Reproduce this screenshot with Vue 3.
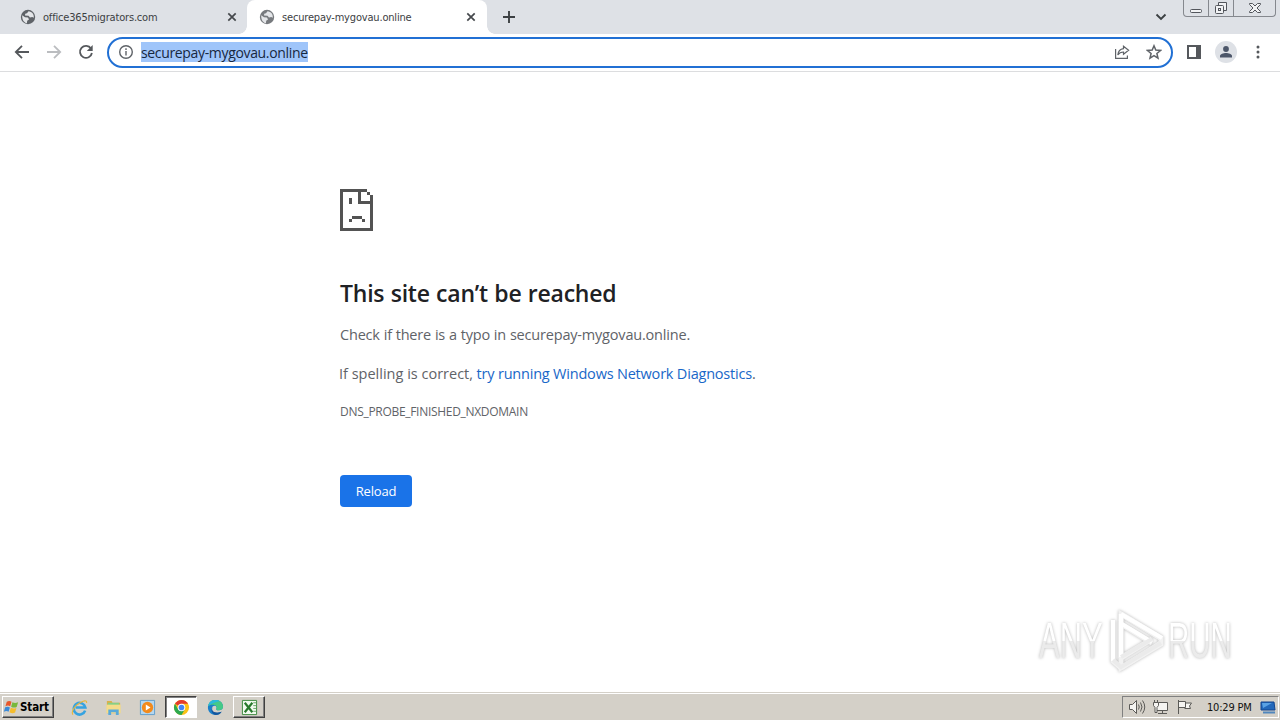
<template>
  <div class="desktop">
    <header class="tab-strip">
      <div
        v-for="(tab, i) in tabs"
        :key="tab.title"
        class="tab"
        :class="{ active: i === activeTab }"
        @click="activeTab = i"
      >
        <svg class="globe" viewBox="0 0 16 16">
          <circle cx="8" cy="8" r="7.2" />
          <path d="M2.2 6.2 5 8.2l3 .4 1 2-1.8 1.2-.3 2.4C3.800 13.600 2 10.500 2.200 6.200ZM8.500 2.200 7 4.200 5.200 4.700 5 6.500l3.500.3 1.500 1.700 2.200-.5 1.600.8C14.200 5 12 2.600 8.500 2.200Z" />
        </svg>
        <span class="tab-title">{{ tab.title }}</span>
        <svg class="tab-close" viewBox="0 0 10 10"><path d="m1.300 1.300 7.400 7.400m0-7.400-7.400 7.400" /></svg>
      </div>
      <button class="new-tab">
        <svg viewBox="0 0 14 14"><path d="M7 1v12M1 7h12" /></svg>
      </button>
      <svg class="tab-search" viewBox="0 0 12 8"><path d="m1.500 1.500 4.500 4.500 4.500-4.500" /></svg>
      <div class="window-controls">
        <span class="control">
          <svg width="14" height="17" viewBox="0 0 14 17"><rect x="1.500" y="9.500" width="11" height="3" rx="1" /></svg>
        </span>
        <span class="control">
          <svg width="14" height="17" viewBox="0 0 14 17">
            <path d="M4.500 5V2.500h8v8H10" />
            <rect x="1.500" y="5.500" width="8" height="8" rx="1" />
            <rect x="4.500" y="8.500" width="2" height="2" />
          </svg>
        </span>
        <span class="control wide">
          <svg width="14" height="17" viewBox="0 0 14 17">
            <path d="M1.500 3.500h3L7 6l2.500-2.500h3v1L9 8l3.500 3.500v1h-3L7 10l-2.500 2.500h-3v-1L5 8 1.500 4.500Z" />
          </svg>
        </span>
      </div>
    </header>

    <nav class="toolbar">
      <svg class="nav-icon" viewBox="0 0 16 16"><path d="M15 8H2m6-6.200L1.800 8 8 14.200" /></svg>
      <svg class="nav-icon disabled" viewBox="0 0 16 16"><path d="M1 8h13M8 1.800 14.200 8 8 14.200" /></svg>
      <svg class="nav-icon" viewBox="0 0 16 16">
        <path d="M13 4.500A6 6 0 1 0 13.900 9" />
        <path class="solid" d="M14.700 1v6H8.800Z" />
      </svg>
      <div class="omnibox">
        <svg class="info" viewBox="0 0 16 16">
          <circle cx="8" cy="8" r="6.300" />
          <path d="M8 7v4.500M8 4.300v1.600" />
        </svg>
        <span class="url">securepay-mygovau.online</span>
        <svg class="share" viewBox="0 0 16 16">
          <path d="M1.600 5v9.400h11.800v-3" />
          <path d="M9.500 2.300 14.600 6.300 9.500 10.300V8C7 8 5.200 8.900 3.800 11 4.200 7.500 6.200 5.100 9.500 4.700Z" />
        </svg>
        <svg class="star" viewBox="0 0 16 16">
          <path d="m8 1.800 1.800 4.300 4.700.4-3.600 3 1.100 4.600L8 11.700l-4 2.400 1.100-4.600-3.600-3 4.700-.4Z" />
        </svg>
      </div>
      <svg class="panel" viewBox="0 0 14 14">
        <rect x="1" y="1" width="12" height="12" />
        <path d="M9 1h4v12H9Z" />
      </svg>
      <span class="avatar">
        <svg viewBox="0 0 14 14">
          <circle cx="7" cy="4" r="2.900" />
          <path d="M1 12.500V11c0-2 3.500-3 6-3s6 1 6 3v1.500Z" />
        </svg>
      </span>
      <svg class="menu" viewBox="0 0 4 16">
        <circle cx="2" cy="3" r="1.500" />
        <circle cx="2" cy="8" r="1.500" />
        <circle cx="2" cy="13" r="1.500" />
      </svg>
    </nav>

    <main class="page">
      <svg class="sad-file" viewBox="0 0 33 42" shape-rendering="crispEdges">
        <path d="M0 0h27v3h-6v9h9V6h3v36H0ZM3 3v36h27V15H18V3Z" fill-rule="evenodd" />
        <path d="M27 3h3v3h-3Z" />
        <path d="M9 9h3v6H9ZM12 27h10v3H12ZM9 30h3v3H9ZM22 30h3v3h-3Z" />
      </svg>
      <h1>This site can’t be reached</h1>
      <p class="typo">Check if there is a typo in securepay-mygovau.online.</p>
      <p class="spelling">
        <span class="lead">If spelling is correct,</span> <a>try running Windows Network Diagnostics</a>.
      </p>
      <p class="code">DNS_PROBE_FINISHED_NXDOMAIN</p>
      <button class="reload">Reload</button>

      <div class="watermark">
        <span class="word">ANY</span>
        <svg viewBox="0 0 58 62">
          <path d="M12 4 52 28v6L12 58V4Z" class="halo" />
          <path d="M4 10v41l8 7M12 4v44M12 4l41 25M12 14l31 19M12 48l31-19M12 58l41-26" class="halo" />
          <path d="M4 10v41M12 4v43M12 4l41 24M13 14l30 18" class="bright" />
          <path d="M4 50l8 7 40-24M12 47l31-18" class="dim" />
        </svg>
        <span class="word run">RUN</span>
      </div>
    </main>

    <footer class="taskbar">
      <button class="start">
        <svg viewBox="0 0 18 16">
          <path fill="#e8572b" d="M4 2.500c2-1.300 3.500-1 5 0L7.600 7.300C6 6.300 4.600 6.200 2.600 7.300Z" />
          <path fill="#78b83c" d="M10 3c2 1 3.500 1 6 0l-1.500 5c-2 1-4 .8-5.900-.3Z" />
          <path fill="#3b8ad8" d="M2.300 8.300c2-1 3.500-.8 5 .1L5.900 13c-1.600-1-3-1-5 0Z" />
          <path fill="#f5bd2d" d="M8.300 8.900c2 1 3.600 1 5.900.2l-1.400 4.800c-2.200 1-4 .7-5.900-.4Z" />
        </svg>
        <span>Start</span>
      </button>
      <div class="launchers">
        <span class="task">
          <svg viewBox="0 0 18 18">
            <path d="M15 12.300A6.200 6.200 0 1 1 15.200 9H5" fill="none" stroke="#36a3e0" stroke-width="2.700" />
            <path d="M2 16.500C-.5 13 5 6.500 9 4.200s8-3.700 7.500 0" fill="none" stroke="#e8b73a" stroke-width="1.200" />
          </svg>
        </span>
        <span class="task">
          <svg viewBox="0 0 18 18">
            <path d="M2 2h5l1 2h8v11H2Z" fill="#dcb04a" />
            <path d="M3 4h12v6H3Z" fill="#86cf86" />
            <path d="M1.500 6h15v9h-15Z" fill="#f5dc8a" />
            <path d="M3.500 17v-6h11v6h-3v-3h-5v3Z" fill="#58a9da" />
          </svg>
        </span>
        <span class="task">
          <svg viewBox="0 0 18 18">
            <path d="M1.500 1.500h15v15h-15Z" fill="#b5d7ef" stroke="#5f9dcb" />
            <circle cx="9" cy="9" r="6" fill="#f28a1c" />
            <path d="m7.200 5.800 5 3.200-5 3.200Z" fill="#fff" />
          </svg>
        </span>
        <span class="task pressed">
          <svg viewBox="0 0 18 18">
            <circle cx="9" cy="9" r="8" fill="#fbc116" />
            <path d="M9 9 2.100 5A8 8 0 0 1 16 5H9Z" fill="#e33b2e" />
            <path d="M2.100 5A8 8 0 0 0 9 17l3.500-6H5.500Z" fill="#2da94f" />
            <circle cx="9" cy="9" r="4" fill="#fff" />
            <circle cx="9" cy="9" r="3" fill="#4285f4" />
          </svg>
        </span>
        <span class="task">
          <svg viewBox="0 0 18 18">
            <path d="M1 8C2 3.500 5 1 9 1c5 0 8 3.500 8 7 0 3-2.500 4-5 4-2 0-2.500-1-2-2 1-2.500-2-4-4-2-2.500 3 .5 7 4 7 2 0 4-.6 5.500-1.700C14 16 12 17 9 17c-5 0-8.500-4-8-9Z" fill="#1a7fc9" />
            <path d="M1.200 7.500C2 3 5 1 9 1c5 0 8 3.500 8 7 0 3-2.500 4-5 4-2 0-2.500-1-2-2 1.500-3-4-5.500-8.800-2.500Z" fill="#45c987" />
            <path d="M1.200 7.500C2 3 5 1 9 1c2 0 3.500.5 4.700 1.400C10 3 6 4 1.200 7.500Z" fill="#2bb8dc" />
            <path d="M6 8.500c-2 3.500 1 7.500 9.500 5C14 15.800 12 17 9 17c-4-1-5.500-5.500-3-8.500Z" fill="#12569e" />
          </svg>
        </span>
        <span class="task raised">
          <svg viewBox="0 0 18 18">
            <path d="M1.500 1.500h15v15h-15Z" fill="#f1faef" stroke="#39883b" />
            <path d="m4 4 8 10M12 4 4 14" stroke="#27792b" stroke-width="2.300" />
            <path d="M13 4h3M13 7h3M13 10h3M13 13h3" stroke="#64a465" />
          </svg>
        </span>
      </div>
      <div class="tray">
        <svg class="speaker" viewBox="0 0 18 16">
          <path d="M1.500 5.500h3l4-4v13l-4-4h-3Z" />
          <path d="M10.500 5.500q1.500 2.500 0 5M12.500 3.500q3 4.500 0 9M14.500 1.500q4.500 6.500 0 13" />
        </svg>
        <svg class="network" viewBox="0 0 18 16">
          <path d="M4.500 3.500h11v8h-11ZM6 14.500h9M10.500 12v2" />
          <path d="M1.500 3.500h5v3l-1.500 2v5H3v-5l-1.500-2ZM2.500 1v2M5.500 1v2" />
        </svg>
        <svg class="flag" viewBox="0 0 18 16">
          <path d="M2.500 1v14M2.500 2.500h7v6h-7M9.500 4h6l-2 3 1 2.500h-6" />
        </svg>
        <time>10:29 PM</time>
        <svg class="show-desktop" viewBox="0 0 16 16">
          <path d="M1 3h13l1 8H1Z" fill="#2368ba" stroke="#12458f" />
          <path d="M2 4h10L3 9Z" fill="#5aa2e4" />
          <path d="M3 13.500h12" stroke="#5087bd" stroke-width="2" />
        </svg>
      </div>
    </footer>
  </div>
</template>

<script setup>
import { ref } from 'vue'

const tabs = [
  { title: 'office365migrators.com' },
  { title: 'securepay-mygovau.online' },
]
const activeTab = ref(1)
</script>

<style>
body {
  margin: 0;
  overflow: hidden;
}
</style>

<style scoped>
.desktop {
  display: flex;
  flex-direction: column;
  width: 1280px;
  height: 720px;
  background: #fff;
  font-family: "DejaVu Sans Condensed", "DejaVu Sans", sans-serif;
}

.desktop *,
.desktop {
  box-sizing: border-box;
}

button {
  border: 0;
  padding: 0;
  font-family: inherit;
}

svg {
  display: block;
  flex: none;
  fill: none;
}

/* Tabs */
.tab-strip {
  display: flex;
  height: 34px;
  background: #dee1e6;
}

.tab {
  display: flex;
  align-items: center;
  width: 239px;
  height: 34px;
  padding: 0 11px 0 12px;
  color: #3c4043;
}

.tab:first-child {
  width: 247px;
  padding: 0 10px 0 20px;
}

.tab.active {
  position: relative;
  width: 240px;
  border-radius: 8px 8px 0 0;
  background: #fff;
}

.tab.active::before,
.tab.active::after {
  content: '';
  position: absolute;
  bottom: 0;
  width: 8px;
  height: 8px;
}

.tab.active::before {
  left: -8px;
  background: radial-gradient(circle at 0 0, transparent 7.5px, #fff 8px);
}

.tab.active::after {
  right: -8px;
  background: radial-gradient(circle at 100% 0, transparent 7.5px, #fff 8px);
}

.globe {
  width: 16px;
  height: 16px;
}

.globe circle {
  fill: #5f6368;
}

.globe path {
  fill: #e4e6e9;
}

.active .globe circle {
  fill: #777a7e;
}

.tab-title {
  flex: 1;
  margin-left: 7px;
  font-size: 11px;
  letter-spacing: -0.18px;
  white-space: nowrap;
}

.tab-close {
  width: 10px;
  height: 10px;
  stroke: #45484c;
  stroke-width: 1.7;
}

.new-tab {
  width: 44px;
  padding-left: 15px;
  background: none;
}

.new-tab svg {
  width: 14px;
  height: 14px;
  stroke: #3c4043;
  stroke-width: 1.9;
}

.tab-search {
  width: 12px;
  height: 8px;
  margin: 13px 16px 0 auto;
  stroke: #3c4043;
  stroke-width: 1.9;
}

.window-controls {
  display: flex;
  width: 93px;
  height: 17px;
  margin-right: 4px;
  border: 1px solid #85888e;
  border-top: 0;
  border-radius: 0 0 4px 4px;
}

.control {
  display: flex;
  justify-content: center;
  width: 25px;
  height: 16px;
  border-right: 1px solid #85888e;
}

.control.wide {
  width: 41px;
  border: 0;
}

.control svg {
  fill: #f1f2f4;
  stroke: #53565c;
}

/* Toolbar */
.toolbar {
  display: flex;
  align-items: center;
  height: 38px;
  padding: 0 20px 1px 14px;
  border-bottom: 1px solid #dcdddf;
}

.nav-icon {
  width: 16px;
  height: 16px;
  margin-right: 16px;
  stroke: #55585c;
  stroke-width: 1.8;
}

.nav-icon:nth-child(3) {
  margin-right: 13px;
}

.nav-icon.disabled {
  stroke: #bbbdc0;
}

.nav-icon .solid {
  fill: #55585c;
  stroke: none;
}

.omnibox {
  display: flex;
  align-items: center;
  width: 1066px;
  height: 31px;
  padding: 0 9px;
  border: 2px solid #2170d4;
  border-radius: 16px;
}

.info {
  width: 16px;
  height: 16px;
  stroke: #5f6368;
  stroke-width: 1.4;
}

.url {
  width: 167px;
  height: 20px;
  margin-left: 7px;
  background: #9fc5fa;
  color: #17283f;
  font-family: "Open Sans", sans-serif;
  font-size: 14px;
  letter-spacing: -0.34px;
  line-height: 21px;
  white-space: nowrap;
}

.share {
  width: 16px;
  height: 16px;
  margin-left: auto;
  stroke: #5f6368;
  stroke-width: 1.2;
}

.star {
  width: 16px;
  height: 16px;
  margin-left: 16px;
  stroke: #5f6368;
  stroke-width: 1.5;
}

.panel {
  width: 14px;
  height: 14px;
  margin-left: 14px;
  stroke: #55585c;
  stroke-width: 2;
}

.panel path {
  fill: #55585c;
  stroke: none;
}

.avatar {
  display: flex;
  align-items: center;
  justify-content: center;
  width: 22px;
  height: 22px;
  margin-left: 14px;
  border-radius: 50%;
  background: #dee1e6;
}

.avatar svg {
  width: 14px;
  height: 14px;
  fill: #4c5669;
}

.menu {
  width: 4px;
  height: 16px;
  margin-left: 19px;
  fill: #55585c;
}

/* Error page */
.page {
  position: relative;
  display: flex;
  flex-direction: column;
  align-items: flex-start;
  height: 620px;
  padding: 117px 0 0 340px;
  color: #5f6368;
  font-family: "Open Sans", sans-serif;
  white-space: nowrap;
}

.sad-file {
  width: 33px;
  height: 42px;
  fill: #535353;
}

h1 {
  margin: 45px 0 0;
  color: #202124;
  font-size: 23px;
  font-weight: 600;
  letter-spacing: -0.22px;
  word-spacing: 0.6px;
  line-height: 34px;
}

p {
  margin: 0;
}

.typo {
  margin-top: 14px;
  font-size: 14.5px;
  letter-spacing: -0.19px;
  word-spacing: 0.3px;
  line-height: 22px;
}

.spelling {
  margin: 17px 0 0 -1px;
  font-size: 14.5px;
  letter-spacing: -0.2px;
  line-height: 22px;
}

.spelling .lead {
  letter-spacing: 0;
}

.spelling a {
  color: #1967c8;
}

.code {
  margin-top: 17px;
  font-size: 12px;
  letter-spacing: -0.3px;
  line-height: 20px;
}

.reload {
  width: 72px;
  height: 32px;
  margin-top: 53px;
  border-radius: 4px;
  background: #1a73e8;
  color: #fff;
  font-size: 13px;
  letter-spacing: -0.2px;
}

.watermark {
  position: absolute;
  top: 537px;
  left: 1039px;
  display: flex;
  align-items: center;
  width: 196px;
  height: 64px;
  filter: drop-shadow(0 0 1.500px #b8b8b8);
}

.watermark .word {
  flex: none;
  width: 110px;
  margin-right: -40px;
  background: linear-gradient(#fff 50%, #ebebeb 50%);
  background-clip: text;
  color: transparent;
  font-family: "Liberation Sans", sans-serif;
  font-size: 50px;
  line-height: 50px;
  transform: scaleX(0.62);
  transform-origin: 0 50%;
}

.watermark .run {
  margin: 0 0 0 1px;
  transform: scaleX(0.59);
}

.watermark svg {
  width: 58px;
  height: 62px;
}

.watermark .halo {
  stroke: #f2f2f2;
  stroke-width: 5;
}

.watermark .bright {
  stroke: #fff;
  stroke-width: 4;
}

.watermark .dim {
  stroke: #ebebeb;
  stroke-width: 4;
}

/* Taskbar */
.taskbar {
  display: flex;
  align-items: center;
  height: 28px;
  padding: 1px 1px 0 2px;
  border-top: 1px solid #d4d0c8;
  background: #d4d0c8;
  box-shadow: inset 0 1px #fff;
}

.start {
  display: flex;
  align-items: center;
  width: 52px;
  height: 22px;
  border: 1px solid;
  border-color: #fff #404040 #404040 #fff;
  background: #d4d0c8;
  box-shadow: inset -1px -1px #808080;
  color: #000;
  font-size: 11.5px;
  font-weight: 700;
}

.start svg {
  width: 17px;
  height: 16px;
}

.start span {
  letter-spacing: -0.1px;
}

.launchers {
  display: flex;
  gap: 2px;
  margin-left: 9px;
}

.task {
  display: flex;
  align-items: center;
  justify-content: center;
  width: 32px;
  height: 22px;
}

.task svg {
  width: 17px;
  height: 17px;
}

.task.pressed {
  border: 1px solid;
  border-color: #404040 #fff #fff #404040;
  background: #fff;
  box-shadow: inset 1px 1px #808080;
}

.task.raised {
  border: 1px solid;
  border-color: #fff #404040 #404040 #fff;
  box-shadow: inset -1px -1px #808080;
}

.tray {
  display: flex;
  align-items: center;
  width: 157px;
  height: 22px;
  margin-left: auto;
  padding-left: 5px;
  border: 1px solid;
  border-color: #808080 #fff #fff #808080;
}

.tray svg {
  width: 18px;
  height: 16px;
}

.speaker,
.network,
.flag {
  margin-right: 6px;
  fill: #f5f4f1;
  stroke: #5b5a57;
}

.speaker path:last-child {
  fill: none;
}

.tray time {
  width: 46px;
  margin-left: 7px;
  color: #111;
  font-size: 11px;
  letter-spacing: -0.2px;
  white-space: nowrap;
}

.tray .show-desktop {
  width: 16px;
  margin-left: 7px;
}
</style>
